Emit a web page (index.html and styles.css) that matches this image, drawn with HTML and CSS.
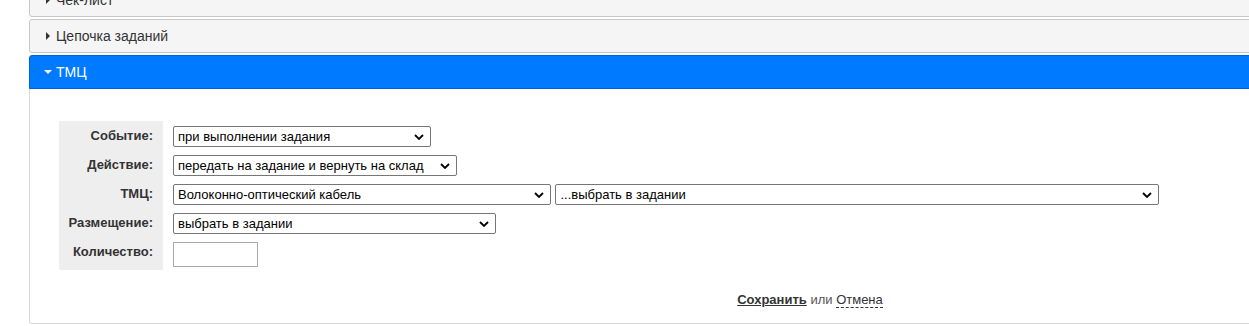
FILE: index.html
```html
<!DOCTYPE html>
<html lang="ru">
<head>
    <meta charset="UTF-8">
    <title>ТМЦ</title>
    <link rel="stylesheet" href="styles.css">
</head>
<body>
    <div class="panels">
        <!-- Collapsed panels -->
        <div class="panel panel-first">
            <div class="panel-heading"><span class="caret caret-right"></span>Чек-лист</div>
        </div>
        <div class="panel">
            <div class="panel-heading"><span class="caret caret-right"></span>Цепочка заданий</div>
        </div>

        <!-- Open panel -->
        <div class="panel panel-open">
            <div class="panel-heading heading-active"><span class="caret caret-down"></span>ТМЦ</div>
            <div class="panel-body">
                <table class="form-table">
                    <tr>
                        <th>Событие:</th>
                        <td>
                            <select class="sel sel-event">
                                <option>при выполнении задания</option>
                            </select>
                        </td>
                    </tr>
                    <tr>
                        <th>Действие:</th>
                        <td>
                            <select class="sel sel-action">
                                <option>передать на задание и вернуть на склад</option>
                            </select>
                        </td>
                    </tr>
                    <tr>
                        <th>ТМЦ:</th>
                        <td>
                            <select class="sel sel-item">
                                <option>Волоконно-оптический кабель</option>
                            </select>
                            <select class="sel sel-item-sub">
                                <option>...выбрать в задании</option>
                            </select>
                        </td>
                    </tr>
                    <tr>
                        <th>Размещение:</th>
                        <td>
                            <select class="sel sel-place">
                                <option>выбрать в задании</option>
                            </select>
                        </td>
                    </tr>
                    <tr>
                        <th>Количество:</th>
                        <td><input type="text" class="qty"></td>
                    </tr>
                </table>

                <div class="actions">
                    <a href="#" class="save">Сохранить</a> или <a href="#" class="cancel">Отмена</a>
                </div>
            </div>
        </div>

        <div class="panel panel-next">
            <div class="panel-heading"></div>
        </div>
    </div>
</body>
</html>
```

FILE: styles.css
```css
body {
    margin: 0;
    overflow: hidden;
    background: #fff;
    font-family: "Liberation Sans", Arial, sans-serif;
    color: #333;
}
.panels {
    padding-left: 29px;
    width: 1562px;
}
.panel {
    border: 1px solid #c8c8c8;
    border-radius: 3px;
    background: #f5f5f5;
    margin-bottom: 2px;
}
.panel-first {
    margin-top: -17px;
}
.panel-heading {
    height: 32px;
    line-height: 32px;
    padding-left: 16px;
    font-size: 14px;
    color: #333;
}
.caret {
    display: inline-block;
    width: 0;
    height: 0;
    margin-right: 6px;
    vertical-align: 1px;
}
.caret-right {
    border-top: 4px solid transparent;
    border-bottom: 4px solid transparent;
    border-left: 4px solid #333;
}
.caret-down {
    border-left: 4px solid transparent;
    border-right: 4px solid transparent;
    border-top: 4px solid #fff;
    margin-left: -2px;
    margin-right: 4px;
    vertical-align: 3px;
}
.panel-open {
    border: none;
    background: #fff;
}
.heading-active {
    background: #007bff;
    color: #fff;
    border: 1px solid #0062cc;
    border-radius: 3px 3px 0 0;
}
.panel-body {
    border: 1px solid #d8d8d8;
    border-top: none;
    border-radius: 0 0 3px 3px;
    padding: 32px 29px 14px 29px;
}
.form-table {
    border-collapse: collapse;
}
.form-table th {
    background: #eee;
    width: 94px;
    padding: 5px 10px 3px 0;
    text-align: right;
    vertical-align: top;
    font-size: 13px;
    line-height: 20px;
    font-weight: bold;
    color: #333;
}
.form-table td {
    padding: 5px 0 3px 10px;
    vertical-align: top;
}
.sel {
    appearance: none;
    -webkit-appearance: none;
    height: 21px;
    border: 1px solid #767676;
    border-radius: 2px;
    background: #fff url("data:image/svg+xml;utf8,<svg xmlns='http://www.w3.org/2000/svg' width='10' height='6' viewBox='0 0 10 6'><path d='M1 1 L5 5 L9 1' fill='none' stroke='%23000' stroke-width='1.8'/></svg>") no-repeat right 6px center;
    padding: 0 20px 0 4px;
    font-family: "Liberation Sans", Arial, sans-serif;
    font-size: 13px;
    color: #000;
    margin: 0;
    vertical-align: top;
}
.sel-event { width: 258px; }
.sel-action { width: 284px; }
.sel-item { width: 378px; }
.sel-item-sub { width: 604px; margin-left: 0; }
.sel-place { width: 323px; }
.qty {
    width: 85px;
    height: 25px;
    box-sizing: border-box;
    border: 1px solid #aaa;
    margin: 0;
}
.actions {
    margin-top: 21px;
    text-align: center;
    font-size: 13px;
    line-height: 18px;
    color: #555;
}
.save {
    color: #333;
    font-weight: bold;
    text-decoration: underline;
}
.cancel {
    color: #333;
    text-decoration: none;
    border-bottom: 1px dashed #333;
}
.panel-next {
    margin-top: 2px;
}
```
